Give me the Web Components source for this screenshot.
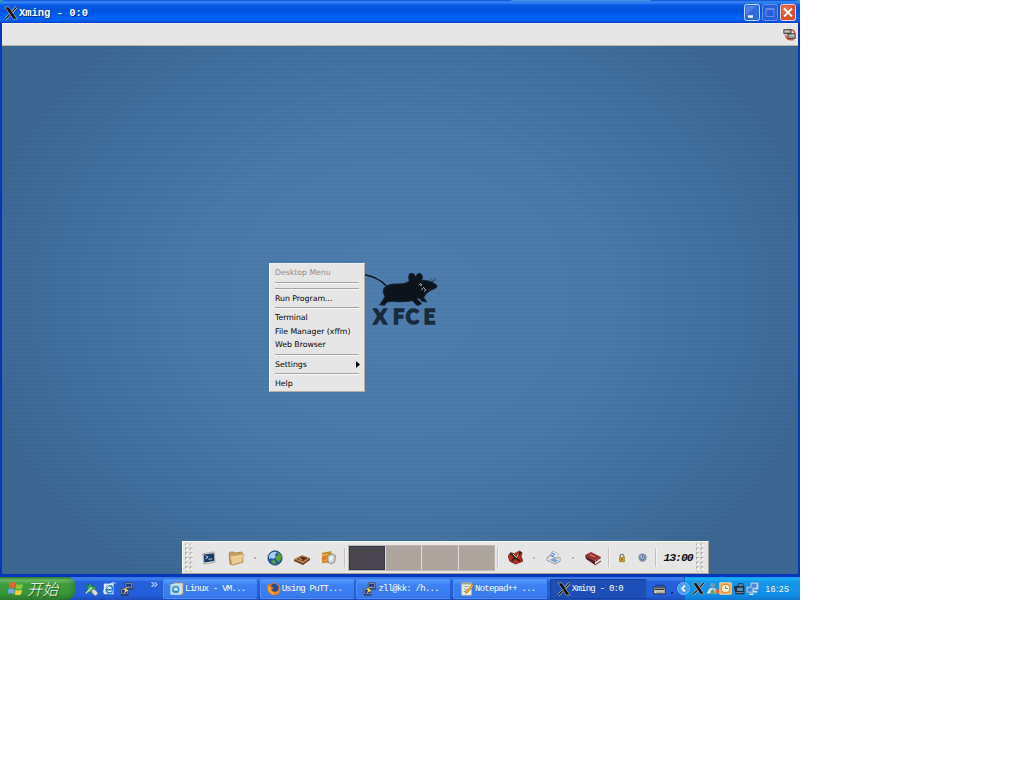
<!DOCTYPE html>
<html lang="zh-CN">
<head>
<meta charset="utf-8">
<title>Xming - 0:0</title>
<style>
html,body{margin:0;background:#fff;width:1024px;height:768px;overflow:hidden}
</style>
</head>
<body>
<xp-screen></xp-screen>
<script>
const icons = {
 x:`<path d="M14.5 1L9.2 7M6.5 10L1.5 15" stroke="#d0d0c0" stroke-width="2.8"/><path d="M14.5 1L9.2 7M6.5 10L1.5 15" stroke="#111" stroke-width="1.5"/><path d="M1 1h4.6l9.4 14h-4.6z" fill="#111" stroke="#c9c9b8" stroke-width=".7"/>`,
 mixer:`<path d="M5 3q8-3 10 4M3 9q2 7 10 5" fill="none" stroke="#d4583a" stroke-width="2"/><path d="M1 2h9v5H1zM6 7h9v6H6z" fill="#999" stroke="#333"/><path d="M2 4h6M8 9h6" stroke="#ddd"/>`,
 term:`<path d="M1 3l13-2 1 12-13 2z" fill="#dcdcd4" stroke="#909088" stroke-width=".7"/><path d="M2 4L13.5 2.5l.6 9L2.6 13z" fill="#1b3764"/><path d="M4 5.5l3 1.5-3 2M7.5 9.5l4-.5" fill="none" stroke="#d7e4f8"/>`,
 folder:`<path d="M1 4l1-2h4l1 1 7-1 1 10-10 3-3-1z" fill="#c99e5c" stroke="#9b7841" stroke-width=".7"/><path d="M2 6l13.5-2-1.2 8L4 15z" fill="#edcd94" stroke="#b99255" stroke-width=".6"/>`,
 globe:`<circle cx="8" cy="8" r="7.2" fill="#205b9f" stroke="#16345c" stroke-width=".6"/><path d="M2 6q2-5 8-4L8 5l1 2-3 2-2-1-2 1z" fill="#a9cdec"/><path d="M10 2q5 2 4.500 7l-3 3-3-3 1-3 2-1zM4 11l3-1 2 2-1 2.500q-3-1-4-3.500z" fill="#5aa338"/>`,
 wood:`<path d="M0 9l8-4 8 3-7 5z" fill="#bc814c"/><path d="M0 9l9 4v2l-9-4zM9 13l7-5v2l-7 5z" fill="#6d3f23"/><path d="M3 9l5-2.500 6 1.500-5 3z" fill="#54301d"/><path d="M5 8.500l3 1" stroke="#e3b27b"/>`,
 files:`<path d="M1 3l10-2 1 12-11 1z" fill="#c79332"/><path d="M1 5l6-1v7l-6 1z" fill="#f1c15a"/><path d="M1 7l5-2v5l-5 2z" fill="#dd7b2b"/><path d="M7 6l5-2 3.500 2-1 7-4 2-3-2z" fill="#cfcfcf" stroke="#777" stroke-width=".8"/><path d="M9 8l4-2-1 5-3 1z" fill="#f5f5f5"/>`,
 redtools:`<path d="M0 6l4-3 3 1 5-3 3 2-1 4 2 5-8 3-6-3z" fill="#b72c1d" stroke="#701e16" stroke-width=".8"/><path d="M2 3l6 5 6-6M7 8l6 4M8 7l-4 5" stroke="#25221d" stroke-width="1.8"/><path d="M5 4l4 4 2-4" stroke="#e6d8b8" fill="none"/>`,
 printer:`<path d="M3 7l4-6 6 3-2 5z" fill="#fafafa" stroke="#999" stroke-width=".7"/><path d="M5 5l4 2M6 3l4 2" stroke="#4d7ec8" stroke-width="1.3"/><path d="M1 8l4-2 6 3 4-1v4l-5 3-9-4z" fill="#e4e6e6" stroke="#777" stroke-width=".7"/><path d="M4 10.500l6 3 3-2-5-3z" fill="#74a1dc"/>`,
 book:`<path d="M0 5l6-3 10 5-6 4z" fill="#9b3030"/><path d="M0 5l10 6v4L1 9z" fill="#5a2228"/><path d="M10 11l6-4v3l-6 4z" fill="#ddd"/><path d="M10 11.500l6-4M10 15l6-4" stroke="#702020"/><path d="M5 4.500l5 2.500" stroke="#d9a090"/>`,
 lock:`<path d="M5 8V5q0-3 3-3t3 3v3" fill="none" stroke="#777" stroke-width="1.8"/><path d="M4 7h8v7H4z" fill="#dba823" stroke="#93701b"/><path d="M8 9v3" stroke="#513e14" stroke-width="2"/>`,
 power:`<circle cx="8" cy="8" r="5" fill="#a9b9ca" stroke="#7b8fa3" stroke-width="2"/><path d="M5 8a3 3 0 1 0 5-2M8 4v4" fill="none" stroke="#527496" stroke-width="1.5"/>`,
 windows:`<path d="M2 2q4-2 6 0L7 8q-3-2-6 0z" fill="#e66532"/><path d="M9 3q3 2 7 0l-1 5q-4 2-7 0z" fill="#8ac83d"/><path d="M0 9q4-2 7 0l-1 5q-3-2-7 0z" fill="#6ba6ec"/><path d="M8 9q3 2 7 0l-1 5q-4 2-7 0z" fill="#f5ce3c"/>`,
 green:`<path d="M1 2l4 2 3-3 1 4h5l-2 7H3L4 6z" fill="#35a657" stroke="#126f3c" stroke-width=".8"/><path d="M2 13L9 6" stroke="#efeedd" stroke-width="1.3"/><path d="M9 8l4 1 3 4-3 3-4-4z" fill="#ddd" stroke="#789"/>`,
 ie:`<path d="M1 2h12v13H1z" fill="#dbe9f7"/><path d="M4 9.500h8q0-5-4-5t-4 4.500q0 4.500 4 4.500 3 0 4-2" fill="none" stroke="#237bcf" stroke-width="2"/><path d="M1 13Q0 9 7 4q7-5 8-2" fill="none" stroke="#fff" stroke-width="1.2"/>`,
 putty:`<path d="M6 1h8v6H6zM1 8h8v6H1z" fill="#c7cbd0" stroke="#373c48"/><path d="M7 2h6v4H7zM2 9h6v4H2z" fill="#1b349c"/><path d="M12 4L6 8l4 1-6 4 2-4-2-1z" fill="#ffe43b"/><path d="M1 15h9M8 8h7" stroke="#292e38"/>`,
 vm:`<path d="M4 1h11v13H4z" fill="#d9d4bd" stroke="#867f6c" stroke-width=".6"/><path d="M1 3h11v11H1z" fill="#a9d5ef" stroke="#dcebf4"/><circle cx="6.500" cy="8.500" r="4" fill="#2d88c8"/><path d="M4 8l2-2 3 1v3H5z" fill="#d9eef9"/>`,
 firefox:`<circle cx="8" cy="8" r="7" fill="#e77a19"/><path d="M5 3q5-3 8 2 2 7-4 7-4 0-5-5z" fill="#264c91"/><path d="M1 2q1 3 4 3l3 2-3 1q1 4 5 3 4-1 4-7 3 6-1 9-5 4-10 0-4-4-2-11z" fill="#f0871b"/><path d="M2 6q1 6 6 7" fill="none" stroke="#ffdc55"/>`,
 notepad:`<path d="M2 1h11v14H2z" fill="#f5f4dc" stroke="#b9b8a5"/><path d="M4 5h6M4 8h5M4 11h5" stroke="#889da2"/><path d="M15 2L7 10l-1 3 3-1 7-8z" fill="#e9af35" stroke="#78521b" stroke-width=".5"/><path d="M2 2h11" stroke="#8e9b7e" stroke-width="1.5"/>`,
 keyboard:`<path d="M2 6l2-2h9l2 2" fill="none" stroke="#1b2b49"/><path d="M1 6.500h14v8H1z" fill="#ddd9c8" stroke="#222"/><path d="M2 9h12" stroke="#333" stroke-width="2"/><path d="M4 12.500h9" stroke="#777"/>`,
 user:`<circle cx="8" cy="4" r="3" fill="#7599b8"/><path d="M2 14q0-7 6-7t6 7z" fill="#b3c9d1"/><path d="M7 8l4 5-4 2-2-5z" fill="#5aa358"/><path d="M12 9h4v5h-4z" fill="#df672c"/><path d="M2 14l5-6" stroke="#e6eddd" stroke-width="2"/>`,
 time:`<path d="M1 1h14v14H1z" fill="#eda54b" stroke="#fff0ca"/><circle cx="8" cy="8" r="5" fill="#fff4d5" stroke="#d1781d"/><path d="M8 5v3h3" fill="none" stroke="#895c2a"/>`,
 device:`<path d="M6 5l1-3h5l1 3" fill="#6889ad" stroke="#182a43"/><path d="M1 5h13v10H3z" fill="#232c39"/><path d="M5 7h7v4H5z" fill="#5993c6"/><path d="M3 13h10" stroke="#8c9cac"/>`,
 net:`<path d="M6 1h9v8H6zM1 6h9v7H1z" fill="#cde2f4" stroke="#8bb4d8"/><path d="M7 2h6v5H7zM2 7h6v5H2z" fill="#4388dc"/><path d="M4 15h5M10 12h4" stroke="#dfedf9" stroke-width="2"/>`
};
const define = (name, html, fn) => customElements.define(name, class extends HTMLElement {
  connectedCallback(){
    if(this.shadowRoot) return;
    this.attachShadow({mode:'open'}).innerHTML = typeof html === 'function' ? html(this) : html;
    if(fn) fn(this);
  }
});

define('ui-icon', e => `<style>:host{display:block;flex:none;width:${e.getAttribute('size')||14}px;height:${e.getAttribute('size')||14}px}svg{display:block;width:100%;height:100%}</style><svg viewBox="0 0 16 16" fill="none">${icons[e.getAttribute('name')]}</svg>`);

define('title-bar', `<style>
:host{display:flex;align-items:center;height:23px;box-sizing:border-box;padding:2px 4px 0 4px;border-radius:5px 5px 0 0;background:linear-gradient(#0a4cd0 0,#3b8cf6 2px,#0a5ae4 5px,#0052e0 10px,#0060f8 17px,#0063fb 20px,#0040c4 23px)}
b{flex:1;margin-left:1px;color:#fff;font:bold 10.5px/20px "Liberation Mono","Noto Sans CJK SC",monospace;letter-spacing:-.02px;text-shadow:1px 1px #0b2c80;white-space:pre}
.buttons{display:flex;gap:2px}
svg{display:block;width:16px;height:17px}
</style><ui-icon name="x" size="14"></ui-icon><b>Xming - 0:0</b>
<div class="buttons">
<svg viewBox="0 0 16 17"><rect x=".5" y=".5" width="15" height="16" rx="2" fill="#3169e0" stroke="#c5d8fa"/><path d="M2 2h10L2 11z" fill="#6798f4" opacity=".5"/><path d="M4 12.5h5" stroke="#fff" stroke-width="2.4"/></svg>
<svg viewBox="0 0 16 17"><rect x=".5" y=".5" width="15" height="16" rx="2" fill="#255fdc" stroke="#6b94e8"/><path d="M4 4.5h8v8H4zM4 5.5h8" fill="none" stroke="#648ce6"/></svg>
<svg viewBox="0 0 16 17"><rect x=".5" y=".5" width="15" height="16" rx="2" fill="#dc4f2b" stroke="#f6d3ca"/><path d="M2 2h10L2 11z" fill="#f08a68" opacity=".5"/><path d="M4 4.5l8 8m0-8l-8 8" stroke="#fff" stroke-width="2"/></svg>
</div>`);

define('xfce-logo', `<style>:host{display:block;width:80px;height:60px}svg{display:block;width:80px;height:60px;overflow:visible}.mouse{filter:drop-shadow(0 0 2px #1c3450)}</style>
<svg viewBox="310 40 240 180">
<g class="mouse" fill="#0d131a"><path d="M314 60Q358 68 383 97" fill="none" stroke="#101820" stroke-width="4"/>
<path d="M373 101Q385 86 415 88Q436 89 449 80Q444 57 454 56Q464 55 468 67Q473 52 484 58Q493 68 485 76Q512 77 527 88Q537 96 526 101Q506 109 498 119L492 129L502 142L487 140L478 130L471 132L486 147L473 153L458 138Q422 144 399 140L382 142L374 152L360 150L370 136Q373 128 376 126Q367 111 373 101Z" stroke="#1c2d40" stroke-width="2"/></g>
<path d="M477 91l5-4 5 4-5 2M485 106l7-8 6 8-4 5" fill="none" stroke="#c9d4dc" stroke-width="2.5"/><path d="M513 70l7 12 5-14m-12 13l18-7" fill="none" stroke="#273f58" stroke-width="2"/>
<text x="341 400 438 492" y="208" style="font:900 60px Lato,sans-serif" fill="#172b3d" stroke="#172b3d" stroke-width="4">XFCE</text></svg>`);

define('menu-item', e => `<style>:host{display:flex;align-items:center;justify-content:space-between;height:13.5px;padding:0 4px 0 5px;color:${e.hasAttribute('dim')?'#8d8d8d':'#000'};font:7.8px/13px "DejaVu Sans",sans-serif;letter-spacing:-.03px;white-space:nowrap}svg{width:4px;height:7px}</style><slot></slot>${e.hasAttribute('more')?'<svg viewBox="0 0 4 7"><path d="M0 0l4 3.5L0 7z" fill="#000"/></svg>':''}`);
define('menu-rule', `<style>:host{display:block;height:6px;padding:2px 5px 0;box-sizing:border-box}i{display:block;border-top:1px solid #aaa39b;border-bottom:1px solid #fafafa}</style><i></i>`);
define('desktop-menu', `<style>:host{display:block;box-sizing:border-box;width:96px;height:129px;padding-top:2px;background:#e6e6e6;border:1px solid;border-color:#f4f2ee #b5aea5 #b5aea5 #f4f2ee}</style>
<menu-item dim>Desktop Menu</menu-item><menu-rule></menu-rule><menu-rule></menu-rule><menu-item>Run Program...</menu-item><menu-rule></menu-rule><menu-item>Terminal</menu-item><menu-item>File Manager (xffm)</menu-item><menu-item>Web Browser</menu-item><menu-rule></menu-rule><menu-item more>Settings</menu-item><menu-rule></menu-rule><menu-item>Help</menu-item>`);

define('panel-cell', e => `<style>:host{display:flex;align-items:center;justify-content:center;flex:none;width:${e.getAttribute('w')}px}</style><slot></slot>`);
define('panel-rule', e => `<style>:host{display:flex;align-items:center;justify-content:center;flex:none;width:${e.getAttribute('w')}px}i{height:19px;border-left:1px solid #c4bfb9;border-right:1px solid #f4f4f4}</style><i></i>`);
define('panel-dot', `<style>:host{display:flex;align-items:center;justify-content:center;flex:none;width:11.5px}i{width:2px;height:2px;background:#b7b4af}</style><i></i>`);
define('panel-grip', e => `<style>:host{display:block;flex:none;width:${e.getAttribute('w')}px}svg{display:block;width:12px;height:30px;margin-left:${e.getAttribute('m')||1}px}</style><svg><defs><pattern id="g" width="4.7" height="4.7" patternUnits="userSpaceOnUse"><path d="M.8 .8h2.600v2.600H.8z" fill="#a8a39c"/><path d="M2 2h1.8v1.8H2z" fill="#fff"/></pattern></defs><rect x="1" y="1.5" width="9" height="28" fill="url(#g)"/></svg>`);
define('xfce-panel', `<style>:host{display:flex;box-sizing:border-box;width:527px;height:33px;background:#e6e6e6;border:1px solid;border-color:#fbfaf8 #a79f94 #a79f94 #fbfaf8}
.pager{display:grid;grid-template-columns:repeat(4,1fr);gap:1px;flex:none;width:147px;height:26px;margin-top:3px;box-sizing:border-box;background:#e1ddd8;border:1px solid #bfb8b0}.pager i{background:#ada59d}.pager i:first-child{background:#49474d;box-shadow:inset 0 0 0 1px #36374c}
b{font:italic bold 11.5px "Liberation Mono",monospace;letter-spacing:-1.1px;margin-right:-1px;color:#111}</style>
<panel-grip w="13"></panel-grip><panel-cell w="26.5"><ui-icon name="term"></ui-icon></panel-cell><panel-cell w="27"><ui-icon name="folder" size="16"></ui-icon></panel-cell><panel-dot></panel-dot><panel-cell w="27"><ui-icon name="globe" size="16"></ui-icon></panel-cell><panel-cell w="27"><ui-icon name="wood" size="16"></ui-icon></panel-cell><panel-cell w="26"><ui-icon name="files" size="15"></ui-icon></panel-cell><panel-rule w="7"></panel-rule>
<div class="pager"><i></i><i></i><i></i><i></i></div><panel-rule w="6.5"></panel-rule><panel-cell w="27"><ui-icon name="redtools" size="15"></ui-icon></panel-cell><panel-dot></panel-dot><panel-cell w="27.5"><ui-icon name="printer" size="15"></ui-icon></panel-cell><panel-dot></panel-dot><panel-cell w="27.5"><ui-icon name="book" size="16"></ui-icon></panel-cell><panel-rule w="5.5"></panel-rule><panel-cell w="20"><ui-icon name="lock" size="10"></ui-icon></panel-cell><panel-cell w="20"><ui-icon name="power" size="11"></ui-icon></panel-cell><panel-rule w="7"></panel-rule><panel-cell w="37"><b>13:00</b></panel-cell><panel-grip w="11" m="-1"></panel-grip>`);

define('xming-window', `<style>:host{display:flex;flex-direction:column;height:577px}
.frame{flex:1;display:flex;flex-direction:column;border:solid #0736b8;border-width:0 2px 3px}
.bar{display:flex;align-items:center;justify-content:flex-end;flex:none;height:23px;box-sizing:border-box;padding:0 2px 0;background:#e6e6e6;border-top:1px solid #f5f2ea;border-bottom:1px solid #bcb5a6}
.desk{position:relative;flex:1;background:repeating-linear-gradient(transparent 0 2px,rgba(20,50,95,.09) 3px,transparent 4px),radial-gradient(ellipse 430px 350px at 50% 48%,#4f7eae 0,#4a79aa 48%,#40709f 78%,#3d6793 100%)}
desktop-menu{position:absolute;left:267px;top:217px}xfce-logo{position:absolute;left:361px;top:222px}xfce-panel{position:absolute;left:180px;bottom:0}</style>
<title-bar></title-bar><div class="frame"><div class="bar"><ui-icon name="mixer" size="13"></ui-icon></div><div class="desk"><xfce-logo></xfce-logo><desktop-menu></desktop-menu><xfce-panel></xfce-panel></div></div>`);

define('task-button', e => {const a=e.hasAttribute('active');return `<style>:host{display:flex;align-items:center;flex:none;box-sizing:border-box;width:${e.getAttribute('w')||95}px;height:20px;padding-left:6px;gap:1px;border-radius:2px;border:1px solid ${a?'#173f9a':'#4d8ef8'};border-right-color:#2560d0;background:${a?'#1d4eb8':'linear-gradient(#5799fb,#3c80f3 5px,#3a7cf0 16px,#3370df)'};color:#fff;font:9px/16px "Liberation Mono","Noto Sans CJK SC",monospace;letter-spacing:-.75px;white-space:pre}</style><ui-icon name="${e.getAttribute('icon')}" size="14"></ui-icon><span><slot></slot></span>`});
define('start-button', `<style>:host{display:flex;align-items:center;flex:none;box-sizing:border-box;width:75px;height:23px;padding-left:8px;gap:4px;border-radius:0 8px 9px 0;background:linear-gradient(#2f7d2f,#6dbb68 3px,#3f9b3e 7px,#389838 16px,#2f7b30);box-shadow:inset -3px 0 4px #1e6b2866}
span{margin-top:-2px;color:#fff;font:italic 300 15.5px/20px "Noto Sans CJK SC",sans-serif;text-shadow:1px 1px 1px #23541f}</style><ui-icon name="windows" size="15"></ui-icon><span>开始</span>`);
define('system-tray', `<style>:host{display:flex;align-items:center;flex:none;box-sizing:border-box;width:116px;height:23px;background:linear-gradient(#159aee,#1cb1f5 2px,#1595e9 5px,#1290e8 17px,#0f78cf);border-left:1px solid #0b5fbd}
svg{flex:none;width:13px;height:13px;margin-left:-8px}.icons{display:flex;gap:.6px;margin-left:2px;margin-right:6px}span{color:#fff;font:8.4px/14px "Liberation Sans",sans-serif;letter-spacing:.65px}</style>
<svg viewBox="0 0 13 13"><circle cx="6.5" cy="6.5" r="6" fill="#3f9cf7" stroke="#85c4ff" stroke-width=".8"/><path d="M8 3.5l-3 3 3 3" fill="none" stroke="#fff" stroke-width="1.8"/></svg>
<div class="icons"><ui-icon name="x" size="13"></ui-icon><ui-icon name="user" size="13"></ui-icon><ui-icon name="time" size="13"></ui-icon><ui-icon name="device" size="13"></ui-icon><ui-icon name="net" size="13"></ui-icon></div><span>16:25</span>`);
define('task-bar', `<style>:host{display:flex;align-items:center;height:23px;background:linear-gradient(#3473e4,#3c81f0 2px,#265fdc 5px,#245edb 18px,#1d4cb9)}
.quick{display:flex;align-items:center;width:88px;flex:none;box-sizing:border-box;padding-left:9px;gap:4.5px}.quick i{margin-left:12px;margin-top:-9px;color:#c5dcff;font:normal 13px/12px "Liberation Sans",sans-serif}
.tasks{display:flex;gap:1.7px;width:484px;flex:none}.lang{display:flex;align-items:center;width:37px;flex:none;box-sizing:border-box;padding-left:6px;gap:5px}.lang i{width:2px;height:2px;background:#172f66;margin-top:8px}</style>
<start-button></start-button><div class="quick"><ui-icon name="green"></ui-icon><ui-icon name="ie" size="13"></ui-icon><ui-icon name="putty"></ui-icon><i>»</i></div>
<div class="tasks"><task-button icon="vm">Linux - VM...</task-button><task-button icon="firefox">Using PuTT...</task-button><task-button icon="putty">zll@kk: /h...</task-button><task-button icon="notepad">Notepad++ ...</task-button><task-button icon="x" w="97" active>Xming - 0:0</task-button></div>
<div class="lang"><ui-icon name="keyboard" size="13"></ui-icon><i></i></div><system-tray></system-tray>`);
define('xp-screen', `<style>:host{display:block;width:800px;height:600px;overflow:hidden;background:#2b9bb5}.edge{position:absolute;left:511px;top:0;width:140px;height:1px;background:#4a91df;border-radius:0 0 3px 3px}</style><xming-window></xming-window><div class="edge"></div><task-bar></task-bar>`);
</script>
</body>
</html>
